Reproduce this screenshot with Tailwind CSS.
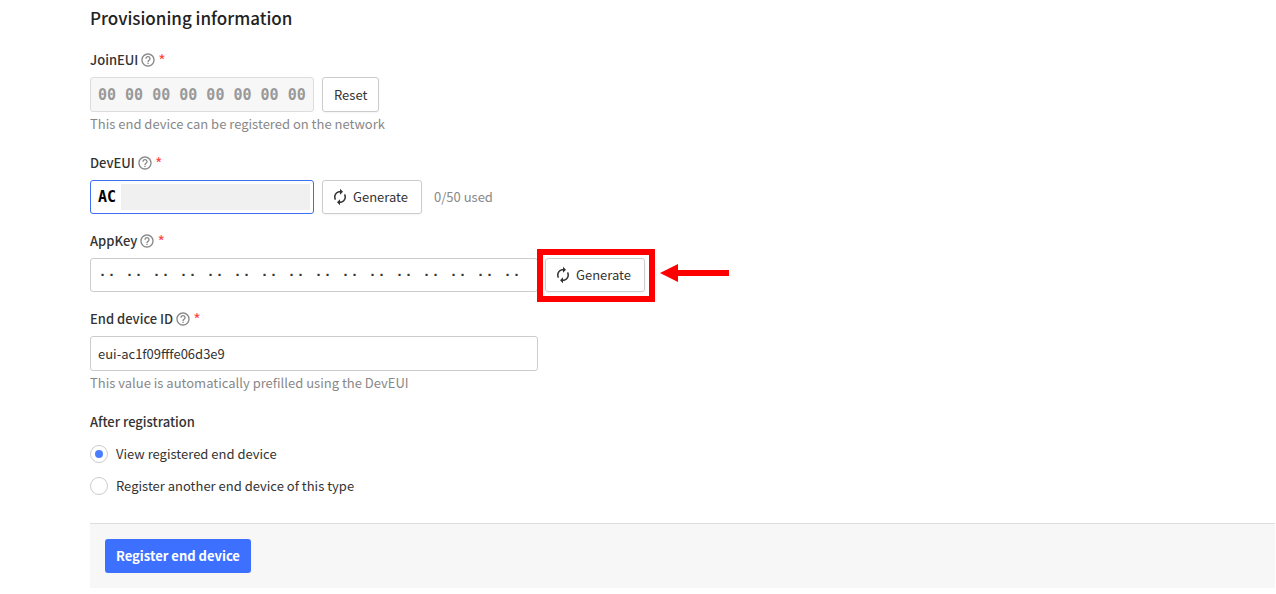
<!DOCTYPE html>
<html lang="en">

<head>
  <meta charset="UTF-8">
  <meta name="viewport" content="width=device-width, initial-scale=1">
  <script src="https://cdn.jsdelivr.net/npm/@tailwindcss/browser@4"></script>
  <title>Register end device</title>
</head>

<body class="bg-white font-['Noto_Sans_CJK_SC','Noto_Sans',sans-serif] text-[13px] leading-[18px] text-[#333]">

  <!-- shared icons -->
  <svg class="hidden">
    <symbol id="icon-help" viewBox="0 0 24 24">
      <path fill="currentColor" d="M11 18h2v-2h-2v2zm1-16C6.48 2 2 6.48 2 12s4.48 10 10 10 10-4.48 10-10S17.52 2 12 2zm0 18c-4.41 0-8-3.59-8-8s3.59-8 8-8 8 3.59 8 8-3.59 8-8 8zm0-14c-2.21 0-4 1.79-4 4h2c0-1.1.9-2 2-2s2 .9 2 2c0 2-3 1.75-3 5h2c0-2.25 3-2.5 3-5 0-2.21-1.79-4-4-4z" />
    </symbol>
    <symbol id="icon-autorenew" viewBox="0 0 24 24">
      <path fill="currentColor" d="M12 6v3l4-4-4-4v3c-4.42 0-8 3.58-8 8 0 1.57.46 3.03 1.24 4.26L6.7 14.8c-.45-.83-.7-1.79-.7-2.8 0-3.31 2.69-6 6-6zm6.76 1.74L17.3 9.2c.44.84.7 1.79.7 2.8 0 3.31-2.69 6-6 6v-3l-4 4 4 4v-3c4.42 0 8-3.58 8-8 0-1.57-.46-3.03-1.24-4.26z" />
    </symbol>
  </svg>

  <form class="pt-1 pl-[90px] pr-px">
    <h2 class="text-[17px] leading-7 font-medium text-[#222]">Provisioning information</h2>

    <div class="mt-[19px] grid gap-[18px]">
      <div>
        <div class="flex items-center h-[18px] mb-2">
          <label for="join-eui" class="font-medium">JoinEUI</label>
          <svg class="w-4 h-4 ml-0.5 text-[#888]"><use href="#icon-help" /></svg>
          <span class="ml-0.5 text-base text-[#ff4545]">*</span>
        </div>
        <div class="flex items-center gap-2">
          <input id="join-eui" type="text" disabled value="00 00 00 00 00 00 00 00" class="w-56 h-[35px] px-[7px] border border-[#ddd] rounded-[3px] bg-[#f7f7f7] font-['DejaVu_Sans_Mono',monospace] font-bold text-[15px] text-[#999]">
          <button type="button" class="h-[35px] px-[11px] border border-[#ccc] rounded-[3px] shadow-xs">Reset</button>
        </div>
        <p class="leading-6 text-[#888]">This end device can be registered on the network</p>
      </div>

      <div>
        <div class="flex items-center h-[18px] mb-2">
          <label for="dev-eui" class="font-medium">DevEUI</label>
          <svg class="w-4 h-4 ml-0.5 text-[#888]"><use href="#icon-help" /></svg>
          <span class="ml-0.5 text-base text-[#ff4545]">*</span>
        </div>
        <div class="flex items-center gap-2">
          <div class="relative">
            <input id="dev-eui" type="text" value="AC" class="block w-56 h-[34px] px-[7px] border border-[#3d6ff5] rounded-[3px] outline-none font-['DejaVu_Sans_Mono',monospace] font-bold text-[15px] text-black">
            <!-- masked part of the EUI -->
            <div class="absolute inset-y-1 left-[31px] right-1 bg-[#f0f0f0]"></div>
          </div>
          <button type="button" class="flex items-center gap-1 w-[100px] h-[34px] pl-2 border border-[#ccc] rounded-[3px] shadow-xs">
            <svg class="w-[18px] h-[18px]"><use href="#icon-autorenew" /></svg>
            Generate
          </button>
          <span class="ml-1 text-[#888]">0/50 used</span>
        </div>
      </div>

      <div>
        <div class="flex items-center h-[18px] mb-2">
          <label for="app-key" class="font-medium">AppKey</label>
          <svg class="w-4 h-4 ml-0.5 text-[#888]"><use href="#icon-help" /></svg>
          <span class="ml-0.5 text-base text-[#ff4545]">*</span>
        </div>
        <div class="flex items-center gap-[7px]">
          <input id="app-key" type="text" value="·· ·· ·· ·· ·· ·· ·· ·· ·· ·· ·· ·· ·· ·· ·· ··" class="w-[448px] h-[34px] px-[7px] border border-[#ccc] rounded-[3px] outline-none font-['Liberation_Mono',monospace] font-bold text-[15px]">
          <div class="relative">
            <button type="button" class="flex items-center gap-1 w-[100px] h-[34px] pl-2 border border-[#ccc] rounded-[3px] shadow-xs">
              <svg class="w-[18px] h-[18px]"><use href="#icon-autorenew" /></svg>
              Generate
            </button>
            <!-- highlight frame and arrow -->
            <div class="absolute -left-2 -right-2.5 -top-[9px] -bottom-2.5 border-6 border-[#f00] pointer-events-none"></div>
            <svg class="absolute left-[115px] top-[6px] w-[70px] h-[18px]" viewBox="0 0 70 18" fill="#f00">
              <path d="M0 9L18 0V6H69V12H18V18z" />
            </svg>
          </div>
        </div>
      </div>

      <div>
        <div class="flex items-center h-[18px] mb-2">
          <label for="device-id" class="font-medium">End device ID</label>
          <svg class="w-4 h-4 ml-0.5 text-[#888]"><use href="#icon-help" /></svg>
          <span class="ml-0.5 text-base text-[#ff4545]">*</span>
        </div>
        <input id="device-id" type="text" value="eui-ac1f09fffe06d3e9" class="block w-[448px] h-[35px] px-[7px] border border-[#ccc] rounded-[3px] outline-none">
        <p class="leading-6 text-[#888]">This value is automatically prefilled using the DevEUI</p>
      </div>

      <fieldset>
        <legend class="font-medium">After registration</legend>
        <div class="grid gap-[14px] mt-[14px]">
          <label class="flex items-center gap-2">
            <input type="radio" name="after" checked class="appearance-none w-[18px] h-[18px] rounded-full border border-[#ccc] bg-white p-1 checked:bg-[#4a7dff] bg-clip-content">
            View registered end device
          </label>
          <label class="flex items-center gap-2">
            <input type="radio" name="after" class="appearance-none w-[18px] h-[18px] rounded-full border border-[#ccc] bg-white p-1 checked:bg-[#4a7dff] bg-clip-content">
            Register another end device of this type
          </label>
        </div>
      </fieldset>
    </div>

    <div class="mt-7 px-[15px] py-[15px] border-t border-[#ddd] bg-[#f7f7f7]">
      <button type="submit" class="block h-[34px] px-[11px] rounded-[3px] bg-[#3d70ff] text-white font-bold">Register end device</button>
    </div>
  </form>

</body>

</html>
